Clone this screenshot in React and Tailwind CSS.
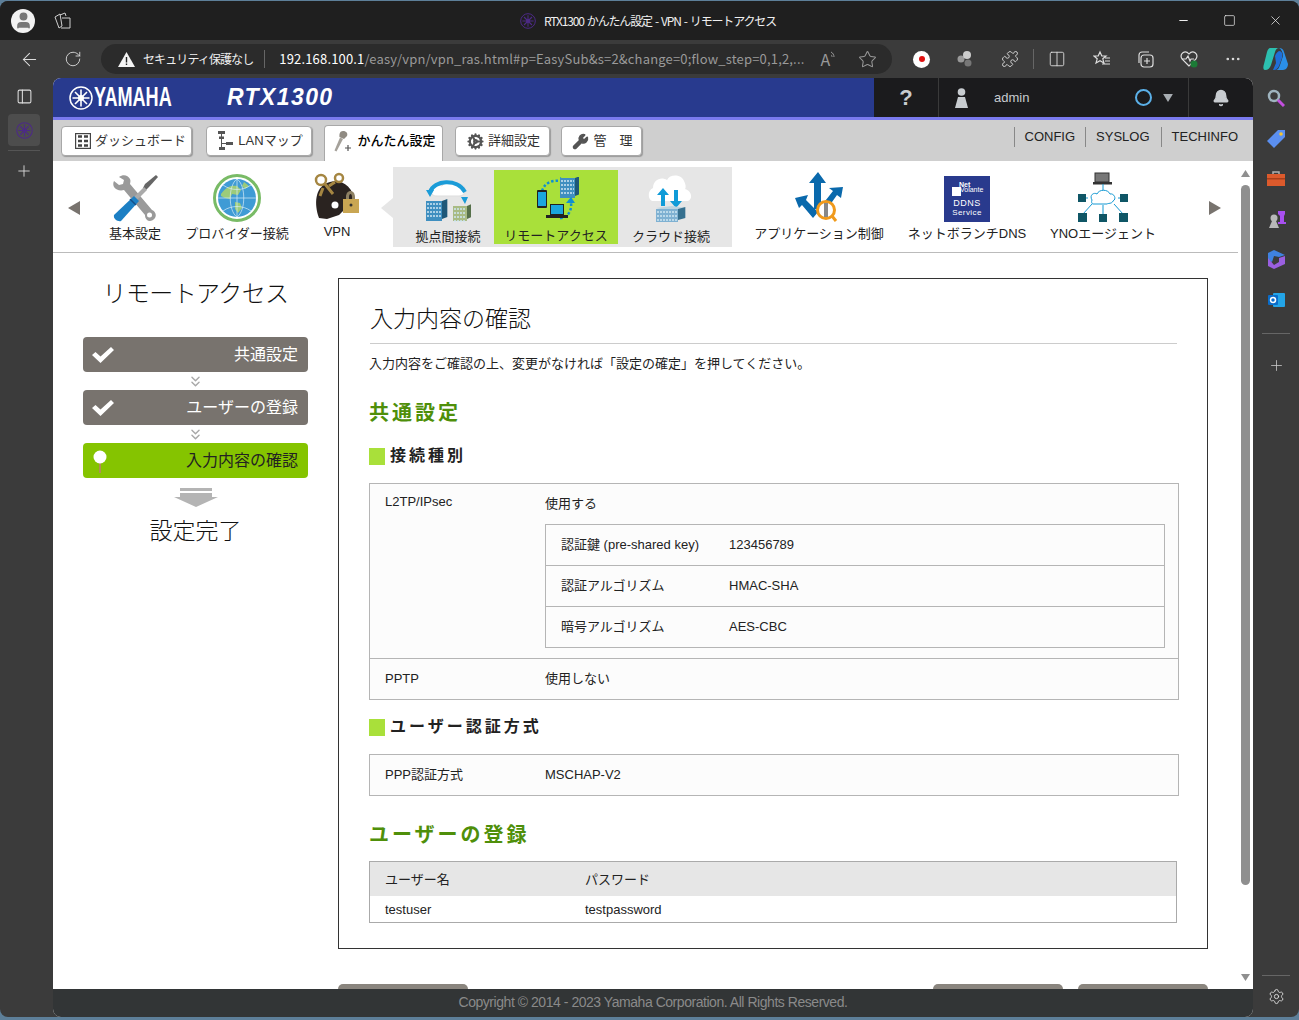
import { ArrowLeft, RotateCw, Star, Puzzle, Columns2, MoreHorizontal, Plus, Settings, ChevronsDown, PanelLeft, Minus, Square, X, Bell, User, Wrench, Cog } from 'lucide-react';

const tabs = [
  { label: 'ダッシュボード', w: 'w-[131px]', icon: 'grid', mr: 'mr-[14px]', pad: 'pl-[8px]' },
  { label: 'LANマップ', w: 'w-[106px]', icon: 'tree', mr: 'mr-[12px]', pad: 'pl-[2px]' },
  { label: 'かんたん設定', w: 'w-[119px]', icon: 'pin', mr: 'mr-[12px]', pad: 'pl-[3px]', active: true },
  { label: '詳細設定', w: 'w-[95px]', icon: 'gear', mr: 'mr-[11px]', pad: 'pl-[2px]' },
  { label: '管　理', w: 'w-[81px]', icon: 'wrench', mr: '', pad: 'pl-[2px]' },
];

function YamahaMark({ size = 24, color = '#fff' }) {
  return (
    <svg width={size} height={size} viewBox="0 0 24 24" fill="none" stroke={color}>
      <circle cx="12" cy="12" r="11" strokeWidth="1.5" />
      <g strokeWidth="1.6">
        <path d="M12 3.5v17M3.5 12h17M6 6l12 12M18 6 6 18" />
      </g>
      <circle cx="12" cy="12" r="3" fill={color} stroke="none" />
    </svg>
  );
}

function TabIcon({ name }) {
  if (name === 'grid') {
    return (
      <svg width="16" height="16" viewBox="0 0 16 16" fill="none" stroke="#444" strokeWidth="1.2">
        <rect x="0.6" y="0.6" width="14.8" height="14.8" />
        <path d="M3 3.5h4M9 3.5h4M3 8h4M9 8h4M3 12.5h4M9 12.5h4" strokeWidth="2.4" />
      </svg>
    );
  }
  if (name === 'tree') {
    return (
      <svg width="17" height="20" viewBox="0 0 17 20" fill="#555">
        <rect x="1" y="0" width="7" height="3" />
        <rect x="2" y="5.5" width="5" height="2.5" />
        <rect x="2" y="16" width="6" height="3" />
        <rect x="9" y="11" width="7" height="3" />
        <path d="M4 3h1v13H4zM5 12h4v1H5z" />
      </svg>
    );
  }
  if (name === 'pin') {
    return (
      <svg width="19" height="21" viewBox="0 0 19 21">
        <path d="M9 0c3.500 0 5 2.500 4 5L10 8 5.500 6C5 3 6 0 9 0Z" fill="#8f8a82" />
        <path d="M6 6.500 9 8 2.500 20.500 0.500 19.500Z" fill="#a5a19a" />
        <path d="M14 14v6M11 17h6" stroke="#555" strokeWidth="1.200" />
      </svg>
    );
  }
  if (name === 'gear') return <Cog size={17} color="#555" strokeWidth={3} />;
  return <Wrench size={17} color="#555" fill="#555" />;
}

function ToolsIcon() {
  return (
    <svg width="46" height="48" viewBox="0 0 46 48">
      <path d="M7 3c4-3 9-2 11 2 1 2 0 4 0 5l22 26c3 1 5 5 3 8-2 3-6 4-8 2-2-2-2-4-2-5L12 16c-4 1-8 0-10-3-1-2-1-4 0-6l5 4 4-1 1-4Z" fill="#9a9a9a" />
      <circle cx="37.500" cy="41" r="2.500" fill="#fff" />
      <path d="M44 1 46 3 37 13 34 16 31 14 33 10Z" fill="#666" />
      <path d="M32 13 35 16 24 27 21 24Z" fill="#aaa" />
      <path d="M22 22 27 27 9 47C6 48 1 45 2 41Z" fill="#1c7fc4" />
      <path d="M18 25 24 31" stroke="#15508a" strokeWidth="1.500" />
    </svg>
  );
}

function GlobeIcon() {
  return (
    <svg width="48" height="48" viewBox="0 0 48 48" fill="none">
      <circle cx="24" cy="24" r="22.500" stroke="#79bb66" strokeWidth="3" fill="#fff" />
      <circle cx="24" cy="24" r="19" fill="#3f9bd5" />
      <path d="M8 20c5-7 10-9 16-8l4 4-3 5-6-1-2 5-5-1-4-2ZM22 28l5 1 2 5-4 5-3-4ZM31 8l5 4-4 3-3-3Z" fill="#9ccb7a" />
      <path d="M5 24h38M24 5v38M10 11c8 6 20 6 28 0M10 37c8-6 20-6 28 0M24 5c-9 6-9 32 0 38M24 5c9 6 9 32 0 38" stroke="#d8ecf7" strokeWidth="0.700" />
    </svg>
  );
}

function VpnIcon() {
  return (
    <svg width="48" height="50" viewBox="0 0 48 50" fill="none">
      <path d="M6 46C1 32 2 16 14 11c12-5 26 1 28 20l-6 2-10 10-12 4Z" fill="#2a2320" />
      <circle cx="8" cy="8" r="5" stroke="#a58642" strokeWidth="2.500" />
      <circle cx="26" cy="6" r="4" stroke="#a58642" strokeWidth="2.500" />
      <path d="M12 12 20 22M22 10l-6 4M10 16l-3 8" stroke="#a58642" strokeWidth="3" />
      <circle cx="22" cy="33" r="3.500" fill="#fff" />
      <path d="M33 25c0-8 9-8 9 0v3h-3v-3c0-4-3-4-3 0v3h-3Z" fill="#8e8164" />
      <rect x="30" y="27" width="16" height="14" fill="#c9a653" />
      <circle cx="38" cy="33" r="1.500" fill="#333" />
    </svg>
  );
}

function Tower({ x, y, w, h, face = '#3f8fc0', side = '#1f5878' }) {
  return (
    <g>
      <rect x={x} y={y} width={w} height={h} fill={face} />
      <path d={`M${x + w} ${y}l${w / 3} -2v${h - 2}l-${w / 3} 2Z`} fill={side} />
      <path d={`M${x + 1} ${y + 3}h${w - 2}M${x + 1} ${y + 7}h${w - 2}M${x + 1} ${y + 11}h${w - 2}M${x + 1} ${y + 15}h${w - 2}`} stroke="#cfe6f2" strokeWidth="1.500" strokeDasharray="2 1" />
    </g>
  );
}

function SitesIcon() {
  return (
    <svg width="46" height="46" viewBox="0 0 46 46" fill="none">
      <path d="M6 14c0-6 8-7 11-5 2-5 12-6 15-1 5-2 9 2 8 6 0 3-3 5-6 5H12c-4 0-6-2-6-5Z" fill="#fff" stroke="#ddd" />
      <path d="M5 15C9 3 32 1 40 15" stroke="#1b9cd8" strokeWidth="4" />
      <path d="M1 13h8l-4 7ZM36 20h7l-3 7Z" fill="#1b9cd8" />
      <Tower x={1} y={24} w={16} h={20} />
      <Tower x={28} y={29} w={14} h={15} face="#a9bb84" side="#56704a" />
    </svg>
  );
}

function RemoteIcon() {
  return (
    <svg width="46" height="46" viewBox="0 0 46 46" fill="none">
      <path d="M9 14C12 5 20 3 28 4" stroke="#0f8fd2" strokeWidth="2.500" strokeDasharray="2.500 2" />
      <path d="M27 0l6 4-6 4Z" fill="#0f8fd2" />
      <Tower x={27} y={1} w={15} h={20} />
      <path d="M27 41c8 0 12-8 11-15" stroke="#0f8fd2" strokeWidth="2.500" strokeDasharray="2.500 2" />
      <path d="M33 26l5-6 4 6Z" fill="#0f8fd2" />
      <rect x="4" y="13" width="10" height="18" rx="1" fill="#222" />
      <rect x="5" y="15" width="8" height="14" fill="#1aa6de" />
      <rect x="17" y="27" width="14" height="11" fill="#222" />
      <rect x="18" y="28" width="12" height="9" fill="#1aa6de" />
      <rect x="13" y="38" width="22" height="3" fill="#222" />
    </svg>
  );
}

function CloudIcon() {
  return (
    <svg width="46" height="52" viewBox="0 0 46 52" fill="none">
      <path d="M4 30c-4-2-5-10 1-13 0-8 8-12 14-8 3-6 14-6 17 1 3 6 1 8 1 8 7 2 8 10 3 12Z" fill="#fff" />
      <path d="M15 17l6 7h-4v11h-4V24H9ZM26 19h4v11h4l-6 7-6-7h4Z" fill="#0f9bd8" />
      <path d="M8 37l16-2 14 2-16 3Z" fill="#bcd4e0" />
      <Tower x={8} y={38} w={22} h={13} face="#7fb1d2" side="#36708f" />
    </svg>
  );
}

function AppControlIcon() {
  return (
    <svg width="50" height="50" viewBox="0 0 50 50">
      <path d="M24 0l8 11h-5v26h-7V11h-5Z" fill="#0a69ac" />
      <path d="M49 15 47 26 43 23 33 37 28 33 39 19 35 16Z" fill="#0a69ac" />
      <path d="M1 26l13-3-2 5 12 12-5 6L8 33l-3 3Z" fill="#0a69ac" />
      <circle cx="32" cy="38" r="8.500" fill="#fff" stroke="#f09a1c" strokeWidth="3" />
      <rect x="30" y="31" width="4" height="14" fill="#888" />
      <path d="M38 44l4 5" stroke="#f09a1c" strokeWidth="3" />
    </svg>
  );
}

function DnsIcon() {
  return (
    <div className="w-[46px] h-[46px] bg-[#293a8d] flex flex-col items-center text-white relative">
      <span className="absolute left-[15px] top-[5px] text-[7px] font-bold leading-none">Net</span>
      <span className="absolute left-[16px] top-[10px] text-[7px] leading-none">Volante</span>
      <span className="absolute left-[8px] top-[11px] w-[9px] h-[9px] bg-white" />
      <span className="mt-[23px] text-[9px] leading-[9px] tracking-[0.5px]">DDNS</span>
      <span className="text-[8px] leading-[9px] tracking-[0.4px]">Service</span>
    </div>
  );
}

function YnoIcon() {
  return (
    <svg width="50" height="50" viewBox="0 0 50 50" fill="none">
      <rect x="17" y="1" width="14" height="9" fill="#777" stroke="#333" />
      <rect x="15" y="10" width="19" height="2.500" fill="#333" />
      <path d="M25 12v9M10 26H2M40 26h8M14 32 5 42M36 32l9 10M25 33v9" stroke="#1599d3" />
      <path d="M14 28c-3-5 2-8 5-6 2-5 11-5 13 0 4-1 7 5 3 7-1 3-5 2-6 3H15c-1 0-2-2-1-4Z" fill="#fff" stroke="#1599d3" />
      <rect x="0" y="22" width="8" height="8" fill="#0f5666" />
      <rect x="42" y="22" width="8" height="8" fill="#0f5666" />
      <rect x="0" y="41" width="9" height="9" fill="#0f5666" />
      <rect x="21" y="42" width="8" height="8" fill="#0f5666" />
      <rect x="41" y="41" width="9" height="9" fill="#0f5666" />
    </svg>
  );
}

function StripItem({ w, label, pad = '', top = 'pt-[11px]', gap = 'mt-[3px]', children }) {
  return (
    <div className={`${w} ${pad} ${top} flex flex-col items-center shrink-0`}>
      <div className="h-[50px] flex items-end justify-center">{children}</div>
      <div className={`${gap} text-[13px] leading-[18px] text-[#222] whitespace-nowrap`}>{label}</div>
    </div>
  );
}

function Step({ label, active }) {
  return (
    <div className={`h-[35px] rounded-[4px] flex items-center justify-between pl-[9px] pr-[10px] ${active ? 'bg-[#85c400] text-[#222]' : 'bg-[#78736e] text-white'}`}>
      {active ? (
        <svg width="16" height="26" viewBox="0 0 16 26">
          <rect x="7" y="14" width="2" height="11" fill="#b08d57" />
          <circle cx="8" cy="9" r="6.500" fill="#fff" />
        </svg>
      ) : (
        <svg width="22" height="16" viewBox="0 0 22 16" fill="#fff">
          <path d="M0 8l3.500-3 5 4.500L19 0l3 3L8.500 16Z" />
        </svg>
      )}
      <span className="text-[16px]">{label}</span>
    </div>
  );
}

function Between() {
  return (
    <div className="h-[18px] flex items-center justify-center">
      <ChevronsDown size={17} color="#a8a8a8" strokeWidth={2} />
    </div>
  );
}

function SubHead({ children }) {
  return (
    <div className="flex items-center h-[18px]">
      <span className="w-[16px] h-[17px] bg-[#a9e03a] mr-[5px]" />
      <span className="text-[16px] font-bold text-[#222] tracking-[3px]">{children}</span>
    </div>
  );
}

function SideTile({ children }) {
  return <div className="h-[40.4px] flex items-center justify-center">{children}</div>;
}

export default function App() {
  return (
    <div className="w-[1299px] h-[1020px] overflow-hidden bg-[#5d7f99] pt-px font-['Liberation_Sans','Noto_Sans_CJK_JP',sans-serif] text-[#222]">
      <div className="h-[1016px] rounded-lg bg-[#3b3b3b] overflow-hidden flex flex-col">

        {/* title bar */}
        <div className="h-[39px] bg-[#1f1f1f] flex items-center relative shrink-0">
          <div className="ml-[11px] w-[24px] h-[24px] rounded-full bg-[#f2f2f2] flex items-center justify-center overflow-hidden">
            <User size={19} color="#777" fill="#777" />
          </div>
          <svg className="ml-[19px]" width="18" height="18" viewBox="0 0 18 18" fill="none" stroke="#cfcfcf">
            <path d="M1 5l5-3 2 12-3 2ZM6 3l5-2 1 3M8 6h8v10H7" />
          </svg>
          <div className="flex-1 flex items-center justify-center pl-[64px] text-[12px] tracking-[-1.15px] [word-spacing:1.5px] text-[#f0f0f0] font-['Noto_Sans_CJK_JP','Noto_Sans',sans-serif]">
            <span className="mr-[8px]"><YamahaMark size={16} color="#4c2a86" /></span>
            RTX1300 かんたん設定 - VPN - リモートアクセス
          </div>
          <div className="flex items-center text-[#eee]">
            <div className="w-[46px] flex justify-center"><Minus size={13} /></div>
            <div className="w-[46px] flex justify-center"><Square size={13} strokeWidth={1.300} /></div>
            <div className="w-[46px] flex justify-center mr-[1px]"><X size={15} strokeWidth={1.200} /></div>
          </div>
        </div>

        {/* toolbar */}
        <div className="h-[38px] flex items-center shrink-0 text-[#ddd]">
          <div className="w-[58px] flex justify-center"><ArrowLeft size={21} strokeWidth={1.200} /></div>
          <div className="w-[30px] flex justify-center"><RotateCw size={18} strokeWidth={1.200} /></div>
          <div className="ml-[13px] w-[791px] h-[30px] rounded-full bg-[#2b2b2b] flex items-center font-['Noto_Sans_CJK_JP','Noto_Sans',sans-serif] text-[13px] whitespace-nowrap">
            <svg className="ml-[17px] mr-[8px]" width="17" height="15" viewBox="0 0 17 15">
              <path d="M8.500 0 17 15H0Z" fill="#f4f4f4" />
              <path d="M7.800 5h1.400v5.500H7.800ZM7.800 11.500h1.400V13H7.800Z" fill="#222" />
            </svg>
            <span className="text-[#eee] text-[12px] tracking-[-0.9px]">セキュリティ保護なし</span>
            <span className="mx-[11px] w-px h-[18px] bg-[#666]" />
            <span className="text-white tracking-[0.17px] ml-[3px]">192.168.100.1</span>
            <span className="text-[#9a9a9a] tracking-[0.17px]">/easy/vpn/vpn_ras.html#p=EasySub&amp;s=2&amp;change=0;flow_step=0,1,2,...</span>
            <span className="ml-[16px] text-[#999] text-[16px] leading-none">A</span>
            <svg className="mb-[8px]" width="6" height="9" viewBox="0 0 6 9" fill="none" stroke="#999"><path d="M1 1c2 1 3 3 3 5M1 4c1 .5 1 1 1 2" /></svg>
            <Star className="ml-[22px]" size={19} color="#999" strokeWidth={1.300} />
          </div>
          <div className="ml-[21px] w-[17px] h-[17px] rounded-full bg-white flex items-center justify-center">
            <span className="w-[6px] h-[6px] rounded-full bg-[#e01010]" />
          </div>
          <svg className="ml-[25px]" width="20" height="18" viewBox="0 0 20 18">
            <circle cx="6" cy="9" r="3.500" fill="#999" />
            <circle cx="12" cy="5" r="4" fill="#ccc" />
            <circle cx="13" cy="13" r="3.500" fill="#777" />
          </svg>
          <Puzzle className="ml-[26px]" size={18} strokeWidth={1.200} />
          <span className="ml-[14px] w-px h-[20px] bg-[#666]" />
          <Columns2 className="ml-[14px]" size={18} strokeWidth={1.200} />
          <svg className="ml-[27px]" width="18" height="18" viewBox="0 0 18 18" fill="none" stroke="#ddd" strokeWidth="1.200">
            <path d="M7 2l1.800 4H13L9.800 8.800 11 13 7 10.800 3 13l1.200-4.200L1 6h4.200ZM12 8h5M12 11h5M9 14h8" />
          </svg>
          <svg className="ml-[25px]" width="18" height="18" viewBox="0 0 18 18" fill="none" stroke="#ddd" strokeWidth="1.200">
            <rect x="5" y="5" width="12" height="12" rx="3" />
            <path d="M11 8v6M8 11h6M3 13V5a3 3 0 0 1 3-3h7" />
          </svg>
          <svg className="ml-[26px]" width="19" height="18" viewBox="0 0 19 18" fill="none" stroke="#ddd" strokeWidth="1.200">
            <path d="M9 16 2 9C-1 4 5-1 9 4c4-5 10 0 7 5Z" />
            <path d="M2 9h4l2-3 2 5 1-2h3" />
            <circle cx="14" cy="14" r="3.500" fill="#1c7a36" stroke="none" />
          </svg>
          <MoreHorizontal className="ml-[25px]" size={18} strokeWidth={1.500} />
          <svg className="ml-[21px]" width="26" height="24" viewBox="0 0 26 24">
            <path d="M7 1h9c-2 0-3 1-4 4l-4 13c-1 3-3 5-6 5-2 0-2-3-1-6l3-12C5 2 6 1 7 1Z" fill="#2cc0b0" />
            <path d="M16 1c3 0 4 1 5 4l4 12c0 3-2 6-5 6h-8c3 0 4-2 5-5l3-9c0-4-2-7-4-8Z" fill="#2a8fe8" />
            <path d="M12 9c1-3 3-5 5-5 2 1 3 3 2 7l-3 8c-1 2-3 4-5 4h-1l3-7Z" fill="#1f6fd8" />
          </svg>
        </div>

        {/* body */}
        <div className="flex-1 flex min-h-0">
          {/* left rail */}
          <div className="w-[53px] shrink-0 flex flex-col items-center">
            <div className="h-[36px] -ml-[5px] flex items-center justify-center text-[#ddd]"><PanelLeft size={17} strokeWidth={1.500} /></div>
            <div className="w-[32px] h-[32px] rounded-[4px] bg-[#4d4d4d] flex items-center justify-center -ml-[5px]">
              <YamahaMark size={17} color="#4c2a86" />
            </div>
            <div className="w-[32px] h-px bg-[#555] mt-[4px] -ml-[5px]" />
            <div className="mt-[11px] -ml-[5px] text-[#ddd]"><Plus size={18} strokeWidth={1.200} /></div>
          </div>

          {/* page */}
          <div className="w-[1200px] shrink-0 flex flex-col rounded-t-lg rounded-b-lg overflow-hidden bg-white">
            {/* header */}
            <div className="h-[42px] shrink-0 flex border-b-[3px] border-[#7a7aee]">
              <div className="w-[821px] bg-[#283a8e] flex items-center text-white">
                <span className="ml-[16px]"><YamahaMark size={24} /></span>
                <span className="ml-[1px] w-[77px] whitespace-nowrap text-[27px] font-bold leading-none scale-x-[0.67] origin-left">YAMAHA</span>
                <span className="ml-[56px] text-[23px] font-bold italic leading-none tracking-[1.4px]">RTX1300</span>
              </div>
              <div className="flex-1 bg-[#1b1b1d] flex items-center text-[#c8ccd0]">
                <div className="w-[65px] h-full border-r border-[#3a3a3a] flex items-center justify-center text-[22px] font-bold">?</div>
                <div className="w-[250px] h-full border-r border-[#3a3a3a] flex items-center">
                  <svg className="ml-[16px]" width="13" height="20" viewBox="0 0 13 20" fill="#c8ccd0">
                    <circle cx="6.500" cy="4" r="3.800" />
                    <path d="M3 9h7l3 11H0Z" />
                  </svg>
                  <span className="ml-[26px] text-[13px]">admin</span>
                  <span className="ml-[106px] w-[17px] h-[17px] rounded-full border-2 border-[#5bb0e8]" />
                  <svg className="ml-[11px]" width="10" height="8" viewBox="0 0 11 9" fill="#a8adb2"><path d="M0 0h11L5.500 9Z" /></svg>
                </div>
                <div className="flex-1 flex justify-center"><Bell size={18} color="#c8ccd0" fill="#c8ccd0" /></div>
              </div>
            </div>

            {/* tabs */}
            <div className="h-[41px] shrink-0 bg-[#cfcfcf] flex items-start pl-[8px] pr-[15px] pt-[6px]">
              {tabs.map((t) => (
                <div
                  key={t.label}
                  className={`${t.w} ${t.mr} ${t.pad} flex items-center justify-center gap-[4px] bg-white border border-[#a8a8a8] whitespace-nowrap ${t.active ? 'h-[36px] -mt-[1px] pb-[5px] rounded-t-[4px] border-b-0 text-[13px] font-medium text-black' : 'h-[30px] rounded-[4px] text-[13px] text-[#333] shadow-[1px_1px_1px_#999]'}`}
                >
                  <TabIcon name={t.icon} />
                  <span>{t.label}</span>
                </div>
              ))}
              <div className="ml-auto flex items-center text-[13px] text-[#222] h-[16px] mt-[3px]">
                <span className="border-l border-[#888] pl-[10px] pr-[10px]">CONFIG</span>
                <span className="border-l border-[#888] pl-[10px] pr-[11px]">SYSLOG</span>
                <span className="border-l border-[#888] pl-[10px]">TECHINFO</span>
              </div>
            </div>

            <div className="flex-1 flex min-h-0 relative">
              <div className="w-[1185px] shrink-0 flex flex-col">
                {/* icon strip */}
                <div className="h-[92px] shrink-0 flex border-b border-[#bbb] relative">
                  <div className="w-[42px] shrink-0 flex items-center justify-center pt-[3px]">
                    <svg width="12" height="14" viewBox="0 0 12 14" fill="#78736e"><path d="M12 0v14L0 7Z" /></svg>
                  </div>
                  <StripItem w="w-[80px]" label="基本設定"><ToolsIcon /></StripItem>
                  <StripItem w="w-[124px]" label="プロバイダー接続"><GlobeIcon /></StripItem>
                  <StripItem w="w-[76px]" label="VPN" gap="mt-px"><VpnIcon /></StripItem>
                  <div className="w-[18px] shrink-0 flex items-center justify-end pt-[3px]">
                    <span className="w-0 h-0 border-y-[10px] border-y-transparent border-r-[12px] border-r-[#e6e6e6]" />
                  </div>
                  <div className="w-[339px] h-[80px] mt-[6px] bg-[#e6e6e6] flex shrink-0">
                    <StripItem w="w-[101px]" pad="pl-[9px]" top="pt-[6px]" gap="mt-[5px]" label="拠点間接続"><SitesIcon /></StripItem>
                    <div className="w-[124px] h-[74px] mt-[3px] bg-[#a9e03a]">
                      <StripItem w="w-[124px]" top="pt-[3px]" gap="mt-[4px]" label="リモートアクセス"><RemoteIcon /></StripItem>
                    </div>
                    <StripItem w="w-[114px]" pad="pr-[8px]" top="pt-[6px]" gap="mt-[5px]" label="クラウド接続"><CloudIcon /></StripItem>
                  </div>
                  <StripItem w="w-[174px]" label="アプリケーション制御"><AppControlIcon /></StripItem>
                  <StripItem w="w-[122px]" label="ネットボランチDNS"><DnsIcon /></StripItem>
                  <StripItem w="w-[150px]" label="YNOエージェント"><YnoIcon /></StripItem>
                  <div className="flex-1 flex items-center justify-center pl-[14px] pt-[3px]">
                    <svg width="12" height="14" viewBox="0 0 12 14" fill="#78736e"><path d="M0 0v14l12-7Z" /></svg>
                  </div>
                </div>

                {/* main */}
                <div className="flex-1 flex min-h-0 overflow-hidden">
                  <div className="w-[285px] shrink-0 pl-[30px] pr-[30px] pt-[24px]">
                    <div className="text-[24px] leading-[34px] tracking-[-0.6px] text-center text-[#111] font-light whitespace-nowrap">リモートアクセス</div>
                    <div className="mt-[26px]">
                      <Step label="共通設定" />
                      <Between />
                      <Step label="ユーザーの登録" />
                      <Between />
                      <Step label="入力内容の確認" active />
                    </div>
                    <div className="mt-[10px] flex justify-center">
                      <svg width="44" height="19" viewBox="0 0 44 19" fill="#b4b4b4">
                        <path d="M6 0h32v3H6ZM6 5h32v4h6L22 19 0 9h6Z" />
                      </svg>
                    </div>
                    <div className="mt-[9px] text-[23px] leading-[30px] text-center text-[#111] font-light">設定完了</div>
                  </div>

                  <div className="flex-1">
                    <div className="mt-[25px] w-[870px] h-[671px] border border-[#333] pl-[31px] pr-[30px] pt-[22px]">
                      <div className="text-[23px] leading-[36px] pb-[6px] border-b border-[#ccc] w-[807px] font-light text-[#111]">入力内容の確認</div>
                      <p className="mt-[10px] text-[13px] leading-[20px] -ml-[1px]">入力内容をご確認の上、変更がなければ「設定の確定」を押してください。</p>
                      <h2 className="mt-[27px] -ml-[1px] text-[20px] leading-[24px] font-bold text-[#4f8f0a] tracking-[3px]">共通設定</h2>
                      <div className="mt-[22px] -ml-[1px]"><SubHead>接続種別</SubHead></div>

                      <div className="mt-[18px] -ml-[1px] w-[810px] border border-[#b5b5b5] bg-[#fcfcfc] text-[13px] text-[#222]">
                        <div className="h-[175px] flex border-b border-[#b5b5b5] pl-[15px]">
                          <div className="w-[160px] pt-[8px] leading-[20px]">L2TP/IPsec</div>
                          <div className="flex-1">
                            <div className="pt-[10px] leading-[20px]">使用する</div>
                            <div className="mt-[10px] w-[620px] border border-[#b5b5b5]">
                              {[
                                ['認証鍵 (pre-shared key)', '123456789'],
                                ['認証アルゴリズム', 'HMAC-SHA'],
                                ['暗号アルゴリズム', 'AES-CBC'],
                              ].map(([k, v], i) => (
                                <div key={k} className={`flex items-center pl-[15px] ${i < 2 ? 'h-[41px] border-b border-[#b5b5b5]' : 'h-[40px]'}`}>
                                  <div className="w-[168px] whitespace-nowrap">{k}</div>
                                  <div>{v}</div>
                                </div>
                              ))}
                            </div>
                          </div>
                        </div>
                        <div className="h-[40px] flex items-center pl-[15px]">
                          <div className="w-[160px]">PPTP</div>
                          <div>使用しない</div>
                        </div>
                      </div>

                      <div className="mt-[18px] -ml-[1px]"><SubHead>ユーザー認証方式</SubHead></div>

                      <div className="mt-[18px] -ml-[1px] w-[810px] h-[42px] border border-[#b5b5b5] bg-[#fcfcfc] flex items-center pl-[15px] text-[13px]">
                        <div className="w-[160px]">PPP認証方式</div>
                        <div>MSCHAP-V2</div>
                      </div>

                      <h2 className="mt-[27px] -ml-[1px] text-[20px] leading-[24px] font-bold text-[#4f8f0a] tracking-[3px]">ユーザーの登録</h2>

                      <div className="mt-[14px] -ml-[1px] w-[808px] border border-[#aaa] text-[13px]">
                        <div className="h-[34px] pt-px bg-[#e6e6e6] flex items-center pl-[15px]">
                          <div className="w-[200px]">ユーザー名</div>
                          <div>パスワード</div>
                        </div>
                        <div className="h-[26px] pt-[2px] flex items-center pl-[15px]">
                          <div className="w-[200px]">testuser</div>
                          <div>testpassword</div>
                        </div>
                      </div>
                    </div>

                    <div className="mt-[35px] w-[870px] flex">
                      <div className="w-[130px] h-[30px] rounded-t-[5px] bg-[#8a857e]" />
                      <div className="w-[130px] h-[30px] rounded-t-[5px] bg-[#8a857e] ml-auto" />
                      <div className="w-[130px] h-[30px] rounded-t-[5px] bg-[#8a857e] ml-[15px]" />
                    </div>
                  </div>
                </div>
              </div>

              {/* page scrollbar */}
              <div className="flex-1 flex flex-col items-center pt-[9px] pb-[8px]">
                <svg width="9" height="7" viewBox="0 0 9 7" fill="#8f8f8f"><path d="M4.500 0 9 7H0Z" /></svg>
                <div className="mt-[8px] w-[9px] h-[700px] rounded-full bg-[#8f8f8f]" />
                <svg className="mt-auto" width="9" height="7" viewBox="0 0 9 7" fill="#8f8f8f"><path d="M0 0h9L4.500 7Z" /></svg>
              </div>
            </div>

            {/* footer */}
            <div className="h-[28px] shrink-0 bg-[#323536] flex items-center justify-center text-[14px] text-[#8a8a8a] tracking-[-0.46px] pb-px">
              Copyright © 2014 - 2023 Yamaha Corporation. All Rights Reserved.
            </div>
          </div>

          {/* right rail */}
          <div className="flex-1 flex flex-col items-center">
            <SideTile>
              <svg width="18" height="18" viewBox="0 0 18 18" fill="none">
                <circle cx="7" cy="7" r="5" stroke="#9fb4bf" strokeWidth="2.500" />
                <path d="M11 11l6 6" stroke="#c44fe0" strokeWidth="3" />
              </svg>
            </SideTile>
            <SideTile>
              <svg width="18" height="18" viewBox="0 0 18 18">
                <path d="M11 0h7v7L7 18 0 11Z" fill="#5b8ff0" />
                <circle cx="14" cy="4" r="1.800" fill="#f4c430" />
              </svg>
            </SideTile>
            <SideTile>
              <svg width="18" height="15" viewBox="0 0 18 15">
                <path d="M6 3V1h6v2" fill="none" stroke="#b0b0b0" strokeWidth="1.500" />
                <path d="M0 3h18v12H0Z" fill="#dc5a2c" />
                <rect x="0" y="7" width="18" height="1.500" fill="#a83f1a" />
              </svg>
            </SideTile>
            <SideTile>
              <svg width="19" height="19" viewBox="0 0 19 19">
                <circle cx="7" cy="8" r="3.500" fill="#b8b8b8" />
                <path d="M5 11h4l3 7H2Z" fill="#b8b8b8" />
                <path d="M11 1h7v3l-1 2v6h2v2h-8v-2h2V6l-2-2Z" fill="#a84ff0" />
              </svg>
            </SideTile>
            <SideTile>
              <svg width="17" height="19" viewBox="0 0 17 19">
                <path d="M0 3 6 0l11 5-6 2-5-1-2 6-4-2Z" fill="#3f82e0" />
                <path d="M0 8v8l6 3 11-5V6L11 8v4l-5 3Z" fill="#9a5fe0" />
              </svg>
            </SideTile>
            <SideTile>
              <svg width="17" height="16" viewBox="0 0 17 16">
                <rect x="5" y="1" width="12" height="14" rx="1" fill="#23a5e8" />
                <rect x="0" y="3" width="10" height="10" rx="1" fill="#0a6cc9" />
                <circle cx="5" cy="8" r="2.500" fill="none" stroke="#fff" strokeWidth="1.500" />
              </svg>
            </SideTile>
            <div className="w-[28px] h-px bg-[#666] mt-[13px]" />
            <div className="mt-[23px] text-[#ccc]"><Plus size={17} strokeWidth={1.100} /></div>
            <div className="mt-auto w-[28px] h-px bg-[#666]" />
            <div className="h-[41px] flex items-center justify-center text-[#ddd]"><Settings size={17} strokeWidth={1.300} /></div>
          </div>
        </div>
      </div>
    </div>
  );
}
